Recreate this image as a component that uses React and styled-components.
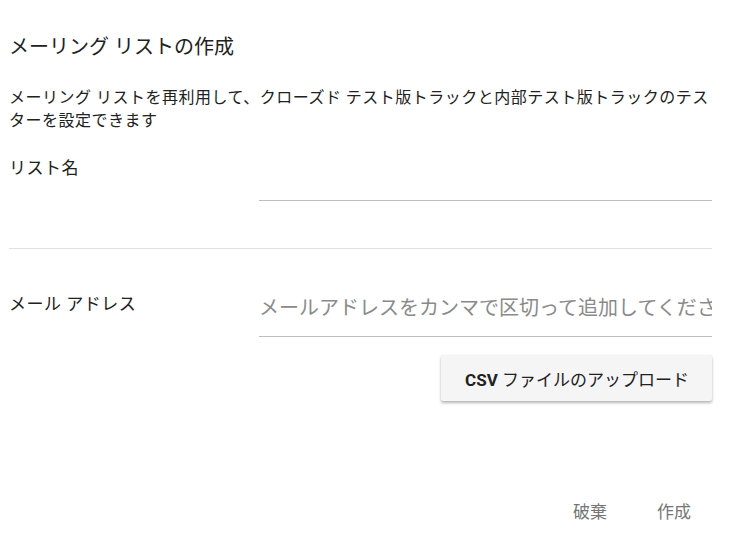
import styled, { createGlobalStyle } from "styled-components";

const GlobalStyle = createGlobalStyle`
  html, body {
    margin: 0;
    padding: 0;
    background: #fff;
  }
  body {
    font-family: Roboto, "Noto Sans CJK JP", sans-serif;
    color: #212121;
  }
`;

const Dialog = styled.div`
  width: 735px;
  height: 536px;
  box-sizing: border-box;
  padding: 35px 23px 0 9px;
  display: flex;
  flex-direction: column;
`;

const Title = styled.h2`
  margin: 0;
  font-size: 20px;
  font-weight: 400;
  line-height: 24px;
  color: #212121;
`;

const Description = styled.p`
  margin: 27px 0 0;
  font-size: 16px;
  line-height: 23px;
  letter-spacing: 0.5px;
  color: #212121;
`;

const FieldRow = styled.div`
  display: grid;
  grid-template-columns: 250px 1fr;
  margin-top: ${({ top }) => top}px;
`;

const Label = styled.label`
  font-size: 17px;
  line-height: 24px;
  letter-spacing: 0.5px;
  padding-top: ${({ offset }) => offset || 0}px;
  color: #212121;
`;

const Input = styled.input`
  display: block;
  width: 100%;
  box-sizing: border-box;
  height: ${({ h }) => h}px;
  border: none;
  border-bottom: 1px solid #bdbdbd;
  outline: none;
  padding: 0 0 9px;
  font-family: Roboto, "Noto Sans CJK JP", sans-serif;
  font-size: 20px;
  line-height: 24px;
  color: #212121;
  background: transparent;

  &::placeholder {
    color: #8a8a8a;
  }
`;

const Divider = styled.hr`
  margin: 47px 0 0;
  border: none;
  border-top: 1px solid #e0e0e0;
`;

const UploadWrap = styled.div`
  display: flex;
  justify-content: flex-end;
  margin-top: 18px;
`;

const UploadButton = styled.button`
  height: 46px;
  padding: 0 23px 0 24px;
  border: none;
  border-radius: 2px;
  background: #f5f5f5;
  box-shadow: 0 2px 3px rgba(0, 0, 0, 0.28), 0 0 1px rgba(0, 0, 0, 0.12);
  font-family: Roboto, "Noto Sans CJK JP", sans-serif;
  font-size: 17px;
  color: #212121;
  cursor: pointer;

  b {
    font-weight: 700;
  }
`;

const Footer = styled.div`
  display: flex;
  justify-content: flex-end;
  gap: 18px;
  margin-top: 91px;
  padding-right: 5px;
`;

const TextButton = styled.button`
  border: none;
  background: none;
  padding: 0 16px;
  height: 36px;
  font-family: Roboto, "Noto Sans CJK JP", sans-serif;
  font-size: 17px;
  color: #757575;
  cursor: pointer;
`;

const App = () => {
  return (
    <>
      <GlobalStyle />
      <Dialog>
        <Title>メーリング リストの作成</Title>
        <Description>
          メーリング リストを再利用して、クローズド テスト版トラックと内部テスト版トラックのテスターを設定できます
        </Description>

        <FieldRow top={24}>
          <Label>リスト名</Label>
          <Input h={45} />
        </FieldRow>

        <Divider />

        <FieldRow top={40}>
          <Label offset={3}>メール アドレス</Label>
          <Input h={48} placeholder="メールアドレスをカンマで区切って追加してください" />
        </FieldRow>

        <UploadWrap>
          <UploadButton>
            <b>CSV</b> ファイルのアップロード
          </UploadButton>
        </UploadWrap>

        <Footer>
          <TextButton>破棄</TextButton>
          <TextButton>作成</TextButton>
        </Footer>
      </Dialog>
    </>
  );
};

export default App;
